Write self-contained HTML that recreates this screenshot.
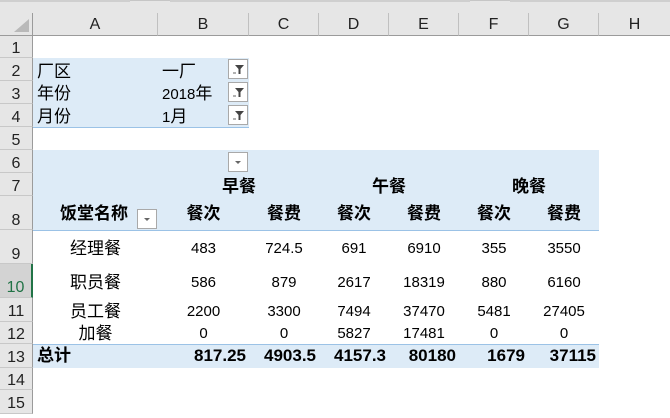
<!DOCTYPE html>
<html><head><meta charset="utf-8"><style>
*{margin:0;padding:0;box-sizing:border-box}
body{width:670px;height:414px;overflow:hidden;background:#fff;position:relative;font-family:"Liberation Sans","Noto Sans CJK SC",sans-serif;font-size:15px;color:#000}
div{position:absolute}
.t{height:20px;line-height:20px;white-space:nowrap}
.z{font-size:17px}
.z17{font-size:17px}
.c{text-align:center}
.b{font-weight:bold}
.rh{left:0;width:33px;background:#e6e6e6;border-bottom:1px solid #c8c8c8;border-right:1px solid #9b9b9b;text-align:center;font-size:16px;color:#222}
.ch{top:13px;height:23px;background:#e6e6e6;border-right:1px solid #c0c0c0;border-bottom:1px solid #9b9b9b;text-align:center;line-height:24px;font-size:16px;color:#222}
.fb{width:20px;height:20px;border:1px solid #a9a9a9;background:#fff}
</style></head><body>
<div style="left:0;top:0;width:670px;height:13px;background:#e6e6e6;border-top:1px solid #c6c6c6"></div>
<div style="left:0;top:0;width:130px;height:2px;background:#cfcfcf"></div>
<div style="left:170px;top:0;width:300px;height:2px;background:#cfcfcf"></div>
<div style="left:510px;top:0;width:160px;height:2px;background:#cfcfcf"></div>
<div style="left:0;top:13px;width:33px;height:23px;background:#e6e6e6;border-right:1px solid #9b9b9b;border-bottom:1px solid #9b9b9b"></div>
<div style="left:14px;top:19px;width:0;height:0;border-left:15px solid transparent;border-bottom:13px solid #b9b9b9"></div>
<div class="ch" style="left:33px;width:125px">A</div>
<div class="ch" style="left:158px;width:91px">B</div>
<div class="ch" style="left:249px;width:70px">C</div>
<div class="ch" style="left:319px;width:70px">D</div>
<div class="ch" style="left:389px;width:70px">E</div>
<div class="ch" style="left:459px;width:70px">F</div>
<div class="ch" style="left:529px;width:70px">G</div>
<div class="ch" style="left:599px;width:71px;border-right:none">H</div>
<div class="rh" style="top:36px;height:22px;line-height:26px">1</div>
<div class="rh" style="top:58px;height:23px;line-height:28px">2</div>
<div class="rh" style="top:81px;height:23px;line-height:28px">3</div>
<div class="rh" style="top:104px;height:23px;line-height:28px">4</div>
<div class="rh" style="top:127px;height:23px;line-height:28px">5</div>
<div class="rh" style="top:150px;height:23px;line-height:28px">6</div>
<div class="rh" style="top:173px;height:23px;line-height:28px">7</div>
<div class="rh" style="top:196px;height:34px;line-height:50px">8</div>
<div class="rh" style="top:230px;height:34px;line-height:50px">9</div>
<div class="rh" style="top:264px;height:34px;line-height:48px;background:#d3d3d3;color:#217346;border-right:2px solid #217346">10</div>
<div class="rh" style="top:298px;height:24px;line-height:28px">11</div>
<div class="rh" style="top:322px;height:22px;line-height:26px">12</div>
<div class="rh" style="top:344px;height:24px;line-height:28px">13</div>
<div class="rh" style="top:368px;height:22px;line-height:26px">14</div>
<div class="rh" style="top:390px;height:24px;line-height:28px">15</div>
<div style="left:33px;top:58px;width:216px;height:70px;background:#ddebf7;border-bottom:1px solid #9bc2e6"></div>
<div style="left:33px;top:150px;width:566px;height:81px;background:#ddebf7;border-bottom:1px solid #9bc2e6"></div>
<div style="left:33px;top:344px;width:566px;height:24px;background:#ddebf7;border-top:1px solid #9bc2e6"></div>
<div class="t z" style="left:37px;top:62px">厂区</div>
<div class="t z" style="left:37px;top:84px">年份</div>
<div class="t z" style="left:37px;top:107px">月份</div>
<div class="t z" style="left:162px;top:62px">一厂</div>
<div class="t" style="left:162px;top:84px">2018<span class="z">年</span></div>
<div class="t" style="left:162px;top:107px">1<span class="z">月</span></div>
<div class="fb" style="left:228px;top:59px"><svg width="18" height="18"><path d="M6 5h9l-3.5 4v5h-2V9z" fill="#444"/><path d="M4 13h3" stroke="#666"/></svg></div>
<div class="fb" style="left:228px;top:82px"><svg width="18" height="18"><path d="M6 5h9l-3.5 4v5h-2V9z" fill="#444"/><path d="M4 13h3" stroke="#666"/></svg></div>
<div class="fb" style="left:228px;top:105px"><svg width="18" height="18"><path d="M6 5h9l-3.5 4v5h-2V9z" fill="#444"/><path d="M4 13h3" stroke="#666"/></svg></div>
<div class="fb" style="left:228px;top:152px"><svg width="18" height="18"><path d="M6 8h6l-3 3z" fill="#666"/></svg></div>
<div class="fb" style="left:137px;top:209px"><svg width="18" height="18"><path d="M6 8h6l-3 3z" fill="#666"/></svg></div>
<div class="t b c z" style="left:199px;top:177px;width:80px">早餐</div>
<div class="t b c z" style="left:349px;top:177px;width:80px">午餐</div>
<div class="t b c z" style="left:489px;top:177px;width:80px">晚餐</div>
<div class="t b z" style="left:60px;top:204px">饭堂名称</div>
<div class="t b c z" style="left:158px;top:204px;width:91px">餐次</div>
<div class="t b c z" style="left:249px;top:204px;width:70px">餐费</div>
<div class="t b c z" style="left:319px;top:204px;width:70px">餐次</div>
<div class="t b c z" style="left:389px;top:204px;width:70px">餐费</div>
<div class="t b c z" style="left:459px;top:204px;width:70px">餐次</div>
<div class="t b c z" style="left:529px;top:204px;width:70px">餐费</div>

<div class="t c z" style="left:33px;top:239px;width:125px">经理餐</div>
<div class="t c" style="left:158px;top:239px;width:91px">483</div>
<div class="t c" style="left:249px;top:239px;width:70px">724.5</div>
<div class="t c" style="left:319px;top:239px;width:70px">691</div>
<div class="t c" style="left:389px;top:239px;width:70px">6910</div>
<div class="t c" style="left:459px;top:239px;width:70px">355</div>
<div class="t c" style="left:529px;top:239px;width:70px">3550</div>

<div class="t c z" style="left:33px;top:273px;width:125px">职员餐</div>
<div class="t c" style="left:158px;top:273px;width:91px">586</div>
<div class="t c" style="left:249px;top:273px;width:70px">879</div>
<div class="t c" style="left:319px;top:273px;width:70px">2617</div>
<div class="t c" style="left:389px;top:273px;width:70px">18319</div>
<div class="t c" style="left:459px;top:273px;width:70px">880</div>
<div class="t c" style="left:529px;top:273px;width:70px">6160</div>

<div class="t c z" style="left:33px;top:302px;width:125px">员工餐</div>
<div class="t c" style="left:158px;top:302px;width:91px">2200</div>
<div class="t c" style="left:249px;top:302px;width:70px">3300</div>
<div class="t c" style="left:319px;top:302px;width:70px">7494</div>
<div class="t c" style="left:389px;top:302px;width:70px">37470</div>
<div class="t c" style="left:459px;top:302px;width:70px">5481</div>
<div class="t c" style="left:529px;top:302px;width:70px">27405</div>

<div class="t c z" style="left:33px;top:324px;width:125px">加餐</div>
<div class="t c" style="left:158px;top:324px;width:91px">0</div>
<div class="t c" style="left:249px;top:324px;width:70px">0</div>
<div class="t c" style="left:319px;top:324px;width:70px">5827</div>
<div class="t c" style="left:389px;top:324px;width:70px">17481</div>
<div class="t c" style="left:459px;top:324px;width:70px">0</div>
<div class="t c" style="left:529px;top:324px;width:70px">0</div>

<div class="t b z" style="left:37px;top:346px">总计</div>
<div class="t b z17" style="left:158px;top:346px;width:88px;text-align:right">817.25</div>
<div class="t b z17" style="left:249px;top:346px;width:67px;text-align:right">4903.5</div>
<div class="t b z17" style="left:319px;top:346px;width:67px;text-align:right">4157.3</div>
<div class="t b z17" style="left:389px;top:346px;width:67px;text-align:right">80180</div>
<div class="t b z17" style="left:459px;top:346px;width:66px;text-align:right">1679</div>
<div class="t b z17" style="left:529px;top:346px;width:67px;text-align:right">37115</div>
</body></html>
